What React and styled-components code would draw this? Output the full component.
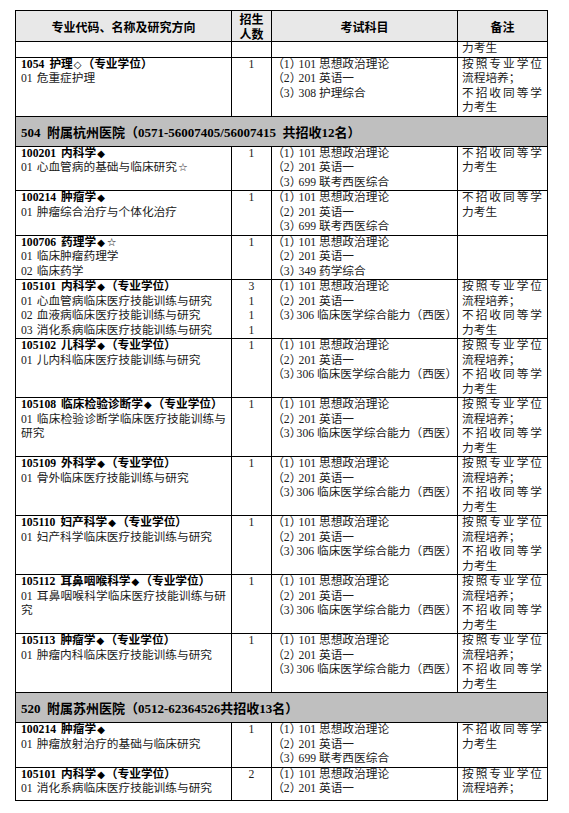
import React from "react";
import styled, { createGlobalStyle } from "styled-components";

const GlobalStyle = createGlobalStyle`
  body {
    margin: 0;
    background: #fff;
    color: #111;
  }
`;

const Page = styled.div`
  padding: 10px 0 0 15px;
`;

const Table = styled.table`
  border-collapse: collapse;
  table-layout: fixed;
  width: 533px;
  font-family: "Liberation Serif", "Noto Sans CJK SC", serif;
  font-size: 11.7px;
  color: #1a1a1a;
`;

const Th = styled.th`
  border: 1px solid #000;
  background: #e8e8e8;
  height: 30px;
  padding: 0 2px;
  font-family: "Noto Sans CJK SC", sans-serif;
  font-weight: 700;
  font-size: 12px;
  line-height: 15px;
  text-align: center;
  vertical-align: middle;
  color: #000;
`;

const SectionCell = styled.td`
  border: 1px solid #000;
  background: #bfbfbf;
  height: 29px;
  padding: 0 5px;
  font-weight: 700;
  font-size: 13px;
  color: #000;
  vertical-align: middle;
  white-space: pre;
`;

const Td = styled.td`
  border: 1px solid #000;
  padding: 0 5px ${(p) => (p.$tail ? "3px" : "0")} ${(p) => p.$left || "5px"};
  line-height: 14.5px;
  vertical-align: top;
  text-align: ${(p) => p.$align || "left"};
  overflow: hidden;
`;

const Title = styled.div`
  font-weight: 700;
  color: #000;
`;

const Code = styled.span`
  margin-right: 5px;
`;

const Mark = styled.span`
  font-family: "DejaVu Sans", sans-serif;
  font-size: ${(p) => (p.$star ? "11px" : "10px")};
  font-weight: 400;
  margin: 0 1px;
`;

const Dir = styled.div`
  text-align: justify;
`;

const DirNo = styled.span`
  margin-right: 4px;
`;

const Num = styled.div`
  text-align: center;
`;

const ExamLine = styled.div`
  white-space: nowrap;
`;

const Idx = styled.span`
  font-feature-settings: "halt";
  margin-right: ${(p) => p.$gap || "3px"};
`;

const Note = styled.div`
  text-align: justify;
`;

const NOTE_A = ["按照专业学位流程培养；", "不招收同等学力考生"];
const NOTE_B = ["不招收同等学力考生"];

const EX_306 = ["101 思想政治理论", "201 英语一", "306 临床医学综合能力（西医）"];
const EX_699 = ["101 思想政治理论", "201 英语一", "699 联考西医综合"];

const rows = [
  { type: "row", code: "1054", name: "护理◇（专业学位）", dirs: ["危重症护理"], counts: ["1"], exams: ["101 思想政治理论", "201 英语一", "308 护理综合"], note: NOTE_A },
  { type: "section", text: "504  附属杭州医院（0571-56007405/56007415  共招收12名）" },
  { type: "row", code: "100201", name: "内科学◆", dirs: ["心血管病的基础与临床研究☆"], counts: ["1"], exams: EX_699, note: NOTE_B },
  { type: "row", code: "100214", name: "肿瘤学◆", dirs: ["肿瘤综合治疗与个体化治疗"], counts: ["1"], exams: EX_699, note: NOTE_B },
  { type: "row", code: "100706", name: "药理学◆☆", dirs: ["临床肿瘤药理学", "临床药学"], counts: ["1"], exams: ["101 思想政治理论", "201 英语一", "349 药学综合"], note: [] },
  { type: "row", code: "105101", name: "内科学◆（专业学位）", dirs: ["心血管病临床医疗技能训练与研究", "血液病临床医疗技能训练与研究", "消化系病临床医疗技能训练与研究"], counts: ["3", "1", "1", "1"], exams: EX_306, note: NOTE_A },
  { type: "row", code: "105102", name: "儿科学◆（专业学位）", dirs: ["儿内科临床医疗技能训练与研究"], counts: ["1"], exams: EX_306, note: NOTE_A },
  { type: "row", code: "105108", name: "临床检验诊断学◆（专业学位）", dirs: ["临床检验诊断学临床医疗技能训练与研究"], counts: ["1"], exams: EX_306, note: NOTE_A },
  { type: "row", code: "105109", name: "外科学◆（专业学位）", dirs: ["骨外临床医疗技能训练与研究"], counts: ["1"], exams: EX_306, note: NOTE_A },
  { type: "row", code: "105110", name: "妇产科学◆（专业学位）", dirs: ["妇产科学临床医疗技能训练与研究"], counts: ["1"], exams: EX_306, note: NOTE_A },
  { type: "row", code: "105112", name: "耳鼻咽喉科学◆（专业学位）", dirs: ["耳鼻咽喉科学临床医疗技能训练与研究"], counts: ["1"], exams: EX_306, note: NOTE_A },
  { type: "row", code: "105113", name: "肿瘤学◆（专业学位）", dirs: ["肿瘤内科临床医疗技能训练与研究"], counts: ["1"], exams: EX_306, note: NOTE_A },
  { type: "section", text: "520  附属苏州医院（0512-62364526共招收13名）" },
  { type: "row", code: "100214", name: "肿瘤学◆", dirs: ["肿瘤放射治疗的基础与临床研究"], counts: ["1"], exams: EX_699, note: NOTE_B },
  { type: "row", code: "105101", name: "内科学◆（专业学位）", dirs: ["消化系病临床医疗技能训练与研究"], counts: ["2"], exams: ["101 思想政治理论", "201 英语一"], note: ["按照专业学位流程培养；"], tail: true },
];

// split out the small marks (◆ ◇ ☆) so they render smaller than the text
function WithMarks({ text }) {
  return text.split(/([◆◇☆])/).map((part, i) =>
    /[◆◇☆]/.test(part) ? (
      <Mark key={i} $star={part === "☆"}>
        {part}
      </Mark>
    ) : (
      part
    )
  );
}

function ExamCell({ exams, tail }) {
  return (
    <Td $left="6px" $tail={tail}>
      {exams.map((e, i) => (
        <ExamLine key={i}>
          <Idx $gap={e.startsWith("306") ? "1px" : "3px"}>（{i + 1}）</Idx>
          {e}
        </ExamLine>
      ))}
    </Td>
  );
}

function NoteCell({ note, tail }) {
  return (
    <Td $left="4px" $tail={tail}>
      <Note>
        {note.map((n, i) => (
          <React.Fragment key={i}>
            {n}
            {i < note.length - 1 && <br />}
          </React.Fragment>
        ))}
      </Note>
    </Td>
  );
}

function MajorRow({ row }) {
  return (
    <tr>
      <Td $tail={row.tail}>
        <Title>
          <Code>{row.code}</Code>
          <WithMarks text={row.name} />
        </Title>
        {row.dirs.map((d, i) => (
          <Dir key={i}>
            <DirNo>{`0${i + 1}`}</DirNo>
            <WithMarks text={d} />
          </Dir>
        ))}
      </Td>
      <Td $tail={row.tail}>
        {row.counts.map((c, i) => (
          <Num key={i}>{c}</Num>
        ))}
      </Td>
      <ExamCell exams={row.exams} tail={row.tail} />
      <NoteCell note={row.note} tail={row.tail} />
    </tr>
  );
}

export default function App() {
  return (
    <Page>
      <GlobalStyle />
      <Table>
        <colgroup>
          <col style={{ width: 216 }} />
          <col style={{ width: 40 }} />
          <col style={{ width: 186 }} />
          <col style={{ width: 90 }} />
        </colgroup>
        <thead>
          <tr>
            <Th>专业代码、名称及研究方向</Th>
            <Th>
              招生
              <br />
              人数
            </Th>
            <Th>考试科目</Th>
            <Th>备注</Th>
          </tr>
        </thead>
        <tbody>
          <tr>
            <Td />
            <Td />
            <Td />
            <NoteCell note={["力考生"]} />
          </tr>
          {rows.map((r, i) =>
            r.type === "section" ? (
              <tr key={i}>
                <SectionCell colSpan={4}>{r.text}</SectionCell>
              </tr>
            ) : (
              <MajorRow key={i} row={r} />
            )
          )}
        </tbody>
      </Table>
    </Page>
  );
}
